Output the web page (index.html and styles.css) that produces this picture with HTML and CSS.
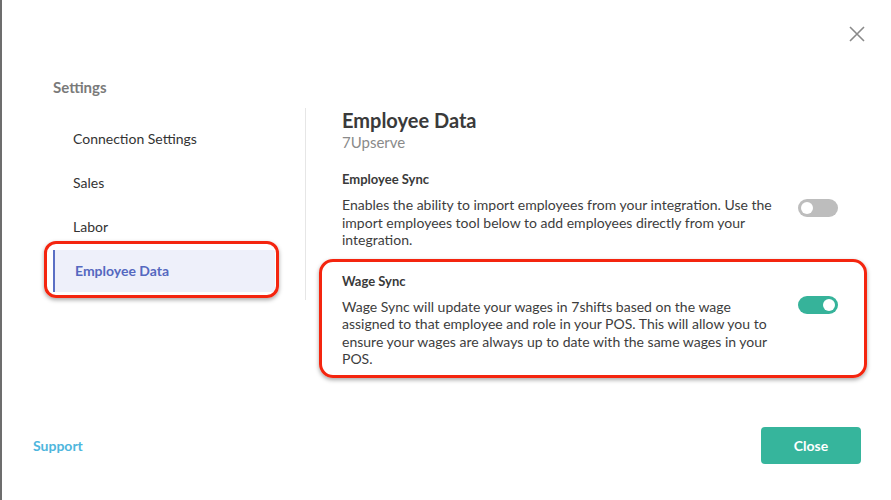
FILE: index.html
```html
<!DOCTYPE html>
<html lang="en">

<head>
  <meta charset="UTF-8">
  <meta name="viewport" content="width=device-width, initial-scale=1.0">
  <title>Employee Data</title>
  <link rel="stylesheet" href="styles.css">
</head>

<body>
  <div class="modal">
    <button class="close-x" type="button" aria-label="Close">
      <svg width="16" height="16" viewBox="0 0 16 16">
        <path d="M1 1L15 15M15 1L1 15" stroke="#8a8a8a" stroke-width="1.6" fill="none" />
      </svg>
    </button>

    <h3 class="settings-title">Settings</h3>

    <div class="layout">
      <ul class="nav">
        <li class="nav-item">Connection Settings</li>
        <li class="nav-item">Sales</li>
        <li class="nav-item">Labor</li>
        <li class="nav-item active">Employee Data</li>
      </ul>

      <div class="content">
        <h1>Employee Data</h1>
        <p class="subtitle">7Upserve</p>

        <div class="setting">
          <h4>Employee Sync</h4>
          <div class="setting-row">
            <p>Enables the ability to import employees from your integration. Use the import employees tool below to add employees directly from your integration.</p>
            <span class="toggle"></span>
          </div>
        </div>

        <div class="setting marked">
          <h4>Wage Sync</h4>
          <div class="setting-row">
            <p>Wage Sync will update your wages in 7shifts based on the wage assigned to that employee and role in your POS. This will allow you to ensure your wages are always up to date with the same wages in your POS.</p>
            <span class="toggle on"></span>
          </div>
        </div>
      </div>
    </div>

    <div class="footer">
      <a class="support" href="#">Support</a>
      <button class="btn-close" type="button">Close</button>
    </div>
  </div>
</body>

</html>
```

FILE: styles.css
```css
body {
  margin: 0;
  font-family: 'Lato', 'Liberation Sans', sans-serif;
  color: #333;
  background: #fff;
}

.modal {
  position: relative;
  height: 500px;
  box-sizing: border-box;
  border-left: 2px solid #6d6d6d;
  display: flex;
  flex-direction: column;
}

.close-x {
  position: absolute;
  top: 26px;
  right: 26px;
  padding: 0;
  border: none;
  background: none;
  cursor: pointer;
}

.settings-title {
  margin: 77px 0 0 51px;
  font-size: 15px;
  line-height: 20px;
  font-weight: 700;
  color: #7a7a7a;
}

.layout {
  display: flex;
  align-items: flex-start;
  margin-top: 11px;
}

.nav {
  list-style: none;
  margin: 0;
  padding: 10px 30px 8px 0;
  margin-left: 51px;
  width: 222px;
  border-right: 1px solid #e6e6e6;
  display: flex;
  flex-direction: column;
  gap: 2px;
}

.nav-item {
  height: 42px;
  line-height: 42px;
  padding-left: 20px;
  font-size: 14px;
  color: #333;
}

.nav-item.active {
  position: relative;
  background: #eef0fa;
  border-left: 2px solid #5b6fc4;
  color: #5568c0;
  font-weight: 700;
  border-radius: 0 2px 2px 0;
}

.nav-item.active::after {
  content: "";
  position: absolute;
  top: -9px;
  left: -11px;
  right: -4px;
  bottom: -6px;
  border: 3px solid #f4250f;
  border-radius: 12px;
  box-shadow: 0 2px 4px rgba(0, 0, 0, 0.35);
}

.content {
  flex: 1;
  padding: 0 53px 0 36px;
}

.content h1 {
  margin: 0;
  font-size: 20px;
  line-height: 24px;
  font-weight: 700;
  color: #3a3a3a;
}

.subtitle {
  margin: 0;
  font-size: 15px;
  line-height: 21px;
  color: #8a8a8a;
}

.setting {
  margin-top: 17px;
}

.setting + .setting {
  margin-top: 23px;
}

.setting h4 {
  margin: 0;
  font-size: 13px;
  line-height: 18px;
  font-weight: 700;
  color: #3a3a3a;
}

.setting-row {
  display: flex;
  align-items: flex-start;
  margin-top: 8px;
}

.setting-row p {
  flex: 1;
  margin: 0;
  font-size: 14px;
  line-height: 17.5px;
  color: #3d3d3d;
  max-width: 440px;
}

.toggle {
  position: relative;
  margin: 3px 0 0 auto;
  width: 40px;
  height: 18px;
  border-radius: 9px;
  background: #bdbdbd;
}

.toggle::after {
  content: "";
  position: absolute;
  top: 3px;
  left: 3px;
  width: 12px;
  height: 12px;
  border-radius: 50%;
  background: #fff;
}

.toggle.on {
  margin-top: -2px;
  background: #36b39a;
}

.toggle.on::after {
  left: 25px;
}

.marked {
  position: relative;
}

.marked::after {
  content: "";
  position: absolute;
  top: -13px;
  left: -23px;
  right: -29px;
  bottom: -10px;
  border: 3px solid #f4250f;
  border-radius: 14px;
  box-shadow: 0 2px 4px rgba(0, 0, 0, 0.35);
}

.footer {
  margin-top: auto;
  display: flex;
  align-items: center;
  justify-content: space-between;
  padding: 0 30px 36px 31px;
}

.support {
  font-size: 14px;
  font-weight: 700;
  color: #4eb6dd;
  text-decoration: none;
}

.btn-close {
  width: 100px;
  height: 37px;
  border: none;
  border-radius: 4px;
  background: #36b59c;
  color: #fff;
  font-family: inherit;
  font-size: 14px;
  font-weight: 700;
  cursor: pointer;
}
```
